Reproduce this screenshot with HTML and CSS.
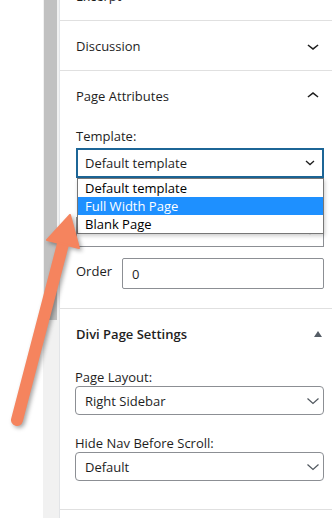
FILE: index.html
```html
<!DOCTYPE html>
<html>
<head>
<meta charset="utf-8">
<link rel="stylesheet" href="styles.css">
</head>
<body>
<div class="layout">
  <div class="gutter"></div>
  <div class="scrollbar"><div class="thumb"></div></div>
  <div class="panel">
    <section class="sec sec-excerpt">
      <div class="sec-head">
        <span class="sec-title">Excerpt</span>
        <svg class="chev" viewBox="0 0 24 24" width="24" height="24"><path d="M17.5 11.6L12 16l-5.5-4.4.9-1.2L12 14l4.6-3.6 1 1.2z"/></svg>
      </div>
    </section>
    <section class="sec">
      <div class="sec-head">
        <span class="sec-title">Discussion</span>
        <svg class="chev" viewBox="0 0 24 24" width="24" height="24"><path d="M17.5 11.6L12 16l-5.5-4.4.9-1.2L12 14l4.6-3.6 1 1.2z"/></svg>
      </div>
    </section>
    <section class="sec sec-open">
      <div class="sec-head">
        <span class="sec-title">Page Attributes</span>
        <svg class="chev" viewBox="0 0 24 24" width="24" height="24"><path d="M6.5 12.4L12 8l5.5 4.4-.9 1.2L12 10l-4.6 3.6-1-1.2z"/></svg>
      </div>
      <div class="sec-body wp-body">
        <div class="wp-label">Template:</div>
        <div class="template-wrap">
          <div class="wp-select focused">
            <span>Default template</span>
            <svg class="sel-chev small" viewBox="0 0 10 6" width="10" height="6"><path d="M1 1l4 3.6L9 1" fill="none" stroke="#1e1e1e" stroke-width="1.3"/></svg>
          </div>
          <div class="wp-label hidden-label">Parent Page:</div>
          <div class="wp-select parent">
            <span></span>
            <svg class="sel-chev small" viewBox="0 0 10 6" width="10" height="6"><path d="M1 1l4 3.6L9 1" fill="none" stroke="#8c8f94" stroke-width="1.3"/></svg>
          </div>
          <ul class="dropdown">
            <li>Default template</li>
            <li class="active">Full Width Page</li>
            <li>Blank Page</li>
          </ul>
        </div>
        <div class="order-row">
          <span class="wp-label order-label">Order</span>
          <div class="wp-input">0</div>
        </div>
      </div>
    </section>
    <section class="sec sec-open">
      <div class="sec-head divi-head">
        <span class="sec-title divi-title">Divi Page Settings</span>
        <svg class="tri" viewBox="0 0 10 8" width="10" height="8"><path d="M1 7L5 1l4 6z" fill="#555d66"/></svg>
      </div>
      <div class="sec-body divi-body">
        <div class="divi-label">Page Layout:</div>
        <div class="divi-select">
          <span>Right Sidebar</span>
          <svg class="sel-chev" viewBox="0 0 14 8" width="14" height="8"><path d="M1.5 1.5l5.5 5 5.5-5" fill="none" stroke="#50575e" stroke-width="1.2"/></svg>
        </div>
        <div class="divi-label second">Hide Nav Before Scroll:</div>
        <div class="divi-select">
          <span>Default</span>
          <svg class="sel-chev" viewBox="0 0 14 8" width="14" height="8"><path d="M1.5 1.5l5.5 5 5.5-5" fill="none" stroke="#50575e" stroke-width="1.2"/></svg>
        </div>
      </div>
    </section>
    <section class="sec"><div class="sec-head"></div></section>
  </div>
</div>
<svg class="arrow" viewBox="0 0 332 518" width="332" height="518">
  <line x1="17" y1="420" x2="63" y2="244" stroke="#f5845e" stroke-width="12" stroke-linecap="round"/>
  <polygon points="70,215 47,240 79,248" fill="#f5845e" stroke="#f5845e" stroke-width="2" stroke-linejoin="round"/>
</svg>
</body>
</html>
```
FILE: styles.css
```css
* { box-sizing: border-box; }
html, body { margin: 0; padding: 0; }
body {
  width: 332px;
  height: 518px;
  overflow: hidden;
  background: #fff;
  font-family: "Open Sans", "Noto Sans", sans-serif;
  font-size: 13px;
  color: #1e1e1e;
  position: relative;
}
.layout { display: flex; height: 518px; overflow: hidden; }
.gutter { width: 43px; flex: none; background: #fff; }
.scrollbar {
  width: 16px;
  flex: none;
  background: #f1f1f1;
  padding-left: 1px;
}
.thumb { width: 13px; height: 320px; background: #c1c1c1; }
.panel {
  flex: 1;
  border-left: 1px solid #e2e4e7;
  background: #fff;
  min-width: 0;
}
.sec { border-bottom: 1px solid #e0e0e0; }
.sec-excerpt { margin-top: -29px; }
.sec-head {
  height: 49px;
  display: flex;
  align-items: center;
  justify-content: space-between;
  padding: 0 7px 0 16px;
}
.sec-open .sec-head { height: 50px; }
.sec-title { font-weight: 500; font-size: 13px; }
.chev { fill: #1e1e1e; }
.wp-body { padding: 0 8px 19px 16px; }
.wp-label { line-height: 16px; margin-top: 7px; }
.template-wrap { position: relative; margin-top: 4px; }
.wp-select {
  height: 30px;
  border: 1px solid #8c8f94;
  display: flex;
  align-items: center;
  justify-content: space-between;
  padding: 0 8px;
  background: #fff;
}
.wp-select.focused { border: 2px solid #1c6596; padding: 0 7px; }
.sel-chev { flex: none; }
.hidden-label { margin-top: 15px; margin-bottom: 8px; visibility: hidden; }
.dropdown {
  position: absolute;
  left: 1px;
  right: 0;
  top: 30px;
  margin: 0;
  padding: 0;
  list-style: none;
  background: #fff;
  border: 1px solid #767676;
  box-shadow: 1px 2px 4px rgba(0,0,0,0.2);
}
.dropdown li { height: 18px; line-height: 18px; padding-left: 7px; color: #000; }
.dropdown li.active { background: #1e90ff; color: #fff; }
.order-row { display: flex; align-items: flex-start; margin-top: 11px; }
.order-label { margin-top: 5px; width: 46px; flex: none; }
.wp-input {
  flex: 1;
  height: 31px;
  border: 1px solid #8c8f94;
  border-radius: 2px;
  padding: 1px 9px 0;
  line-height: 29px;
}
.divi-head { height: 49px !important; padding-right: 9px; }
.divi-title { font-weight: 600; }
.divi-body { padding: 11px 8px 28px 15px; }
.divi-label { line-height: 16px; color: #1e1e1e; }
.divi-label.second { margin-top: 20px; }
.divi-select {
  margin-top: 1px;
  height: 29px;
  border: 1px solid #8c8f94;
  border-radius: 4px;
  display: flex;
  align-items: center;
  justify-content: space-between;
  padding: 0 3px 0 9px;
}
.arrow {
  position: absolute;
  left: 0;
  top: 0;
  pointer-events: none;
  filter: drop-shadow(2px 2px 2px rgba(0,0,0,0.35));
}
```
